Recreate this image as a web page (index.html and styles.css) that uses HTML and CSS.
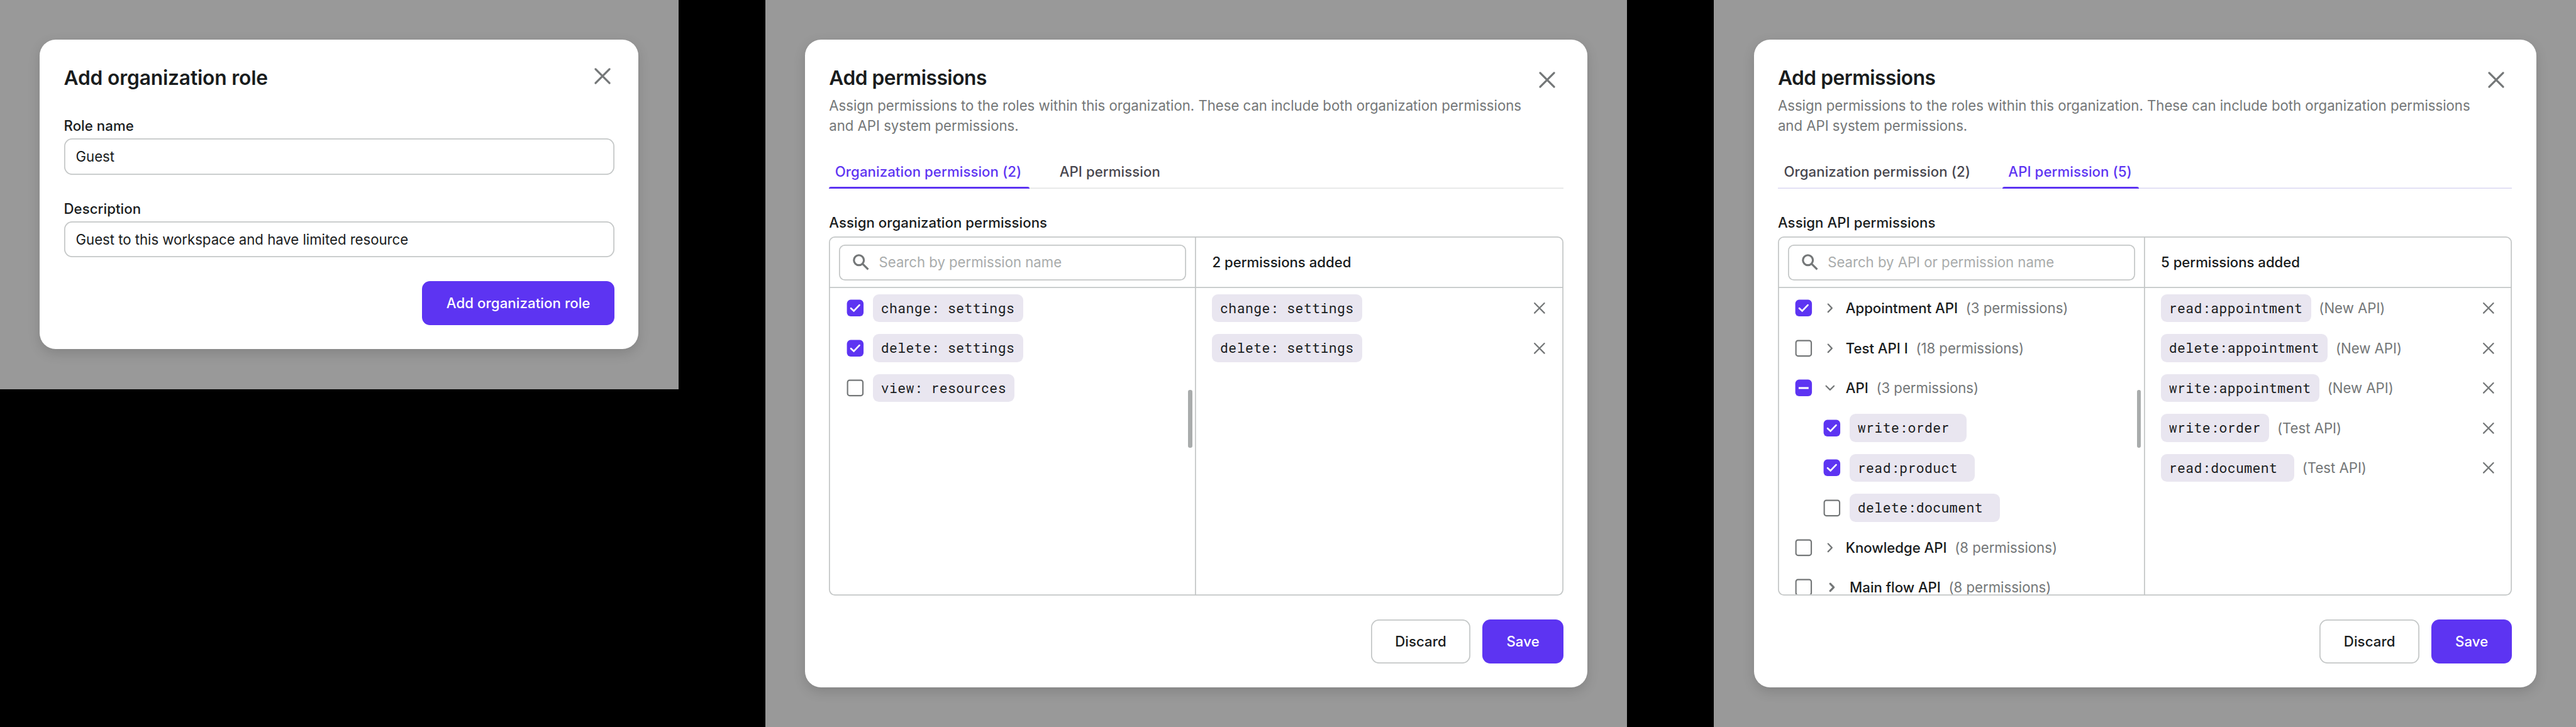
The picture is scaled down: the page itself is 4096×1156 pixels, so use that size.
FILE: index.html
```html
<!DOCTYPE html>
<html lang="en">
<head>
<meta charset="utf-8">
<title>Organization roles and permissions</title>
<link rel="stylesheet" href="styles.css">
</head>
<body>
<svg class="sprite" aria-hidden="true">
  <symbol id="close" viewBox="0 0 24 24"><path d="M5 5l14 14M19 5L5 19"/></symbol>
  <symbol id="close-sm" viewBox="0 0 20 20"><path d="M5.1 5.1l9.8 9.8M14.9 5.1l-9.8 9.8"/></symbol>
  <symbol id="search" viewBox="0 0 20 20"><circle cx="8" cy="8" r="5"/><path d="M11.6 11.6l5.7 5.7"/></symbol>
  <symbol id="right" viewBox="0 0 20 20"><path d="M8.05 6.05L11.9 10l-3.85 3.95"/></symbol>
  <symbol id="right-heavy" viewBox="0 0 20 20"><path d="M8.3 6.35L11.8 10l-3.5 3.65"/></symbol>
  <symbol id="down" viewBox="0 0 20 20"><path d="M6.05 8.05L10 11.9l3.95-3.85"/></symbol>
  <symbol id="box-on" viewBox="0 0 20 20"><rect class="fill" x="1.65" y="1.65" width="16.7" height="16.7" rx="3.8"/><path class="tick" d="M5.7 10.2l2.9 2.7 5.6-5.9"/></symbol>
  <symbol id="box-some" viewBox="0 0 20 20"><rect class="fill" x="1.65" y="1.65" width="16.7" height="16.7" rx="3.8"/><path class="dash" d="M5 10.1h10"/></symbol>
  <symbol id="box-off" viewBox="0 0 20 20"><rect class="line" x="2.3" y="2.3" width="15.4" height="15.4" rx="2.1"/></symbol>
</svg>
<main class="board">
  <section class="scene scene-role">
    <div class="card">
      <header class="head"><h1 class="role-title">Add organization role</h1><svg class="close"><use href="#close"/></svg></header>
      <label class="field"><span class="label">Role name</span><span class="input">Guest</span></label>
      <label class="field"><span class="label">Description</span><span class="input">Guest to this workspace and have limited resource</span></label>
      <footer class="foot"><span class="btn primary">Add organization role</span></footer>
    </div>
  </section>

  <section class="scene scene-permissions">
    <div class="card">
      <header class="head"><div><h1>Add permissions</h1><p class="desc">Assign permissions to the roles within this organization. These can include both organization permissions<br>and API system permissions.</p></div><svg class="close low"><use href="#close"/></svg></header>
      <nav class="tabs"><span class="tab org active">Organization permission (2)</span><span class="tab">API permission</span></nav>
      <div class="label">Assign organization permissions</div>
      <div class="transfer">
        <div class="side source">
          <div class="side-head"><div class="search"><svg><use href="#search"/></svg><span>Search by permission name</span></div></div>
          <div class="rows">
            <div class="row"><svg class="box"><use href="#box-on"/></svg><code>change: settings</code></div>
            <div class="row"><svg class="box"><use href="#box-on"/></svg><code>delete: settings</code></div>
            <div class="row"><svg class="box"><use href="#box-off"/></svg><code>view: resources</code></div>
          </div>
          <i class="thumb"></i>
        </div>
        <div class="side target">
          <div class="side-head"><span class="count">2 permissions added</span></div>
          <div class="rows">
            <div class="row"><code>change: settings</code><svg class="remove"><use href="#close-sm"/></svg></div>
            <div class="row"><code>delete: settings</code><svg class="remove"><use href="#close-sm"/></svg></div>
          </div>
        </div>
      </div>
      <footer class="foot"><span class="btn discard">Discard</span><span class="btn primary save">Save</span></footer>
    </div>
  </section>

  <section class="scene scene-permissions">
    <div class="card">
      <header class="head"><div><h1>Add permissions</h1><p class="desc">Assign permissions to the roles within this organization. These can include both organization permissions<br>and API system permissions.</p></div><svg class="close low"><use href="#close"/></svg></header>
      <nav class="tabs tinted"><span class="tab org">Organization permission (2)</span><span class="tab api active">API permission (5)</span></nav>
      <div class="label">Assign API permissions</div>
      <div class="transfer">
        <div class="side source">
          <div class="side-head"><div class="search"><svg><use href="#search"/></svg><span>Search by API or permission name</span></div></div>
          <div class="rows">
            <div class="row"><svg class="box"><use href="#box-on"/></svg><svg class="arrow"><use href="#right"/></svg><b>Appointment API</b><small>(3 permissions)</small></div>
            <div class="row"><svg class="box"><use href="#box-off"/></svg><svg class="arrow"><use href="#right"/></svg><b>Test API I</b><small>(18 permissions)</small></div>
            <div class="row"><svg class="box"><use href="#box-some"/></svg><svg class="arrow"><use href="#down"/></svg><b>API</b><small>(3 permissions)</small></div>
            <div class="row child"><svg class="box"><use href="#box-on"/></svg><code>write:order </code></div>
            <div class="row child"><svg class="box"><use href="#box-on"/></svg><code>read:product </code></div>
            <div class="row child"><svg class="box"><use href="#box-off"/></svg><code>delete:document </code></div>
            <div class="row"><svg class="box"><use href="#box-off"/></svg><svg class="arrow"><use href="#right"/></svg><b>Knowledge API</b><small>(8 permissions)</small></div>
            <div class="row"><svg class="box"><use href="#box-off"/></svg><svg class="arrow heavy"><use href="#right-heavy"/></svg><b>Main flow API</b><small>(8 permissions)</small></div>
          </div>
          <i class="thumb"></i>
        </div>
        <div class="side target">
          <div class="side-head"><span class="count">5 permissions added</span></div>
          <div class="rows">
            <div class="row"><code>read:appointment</code><small>(New API)</small><svg class="remove"><use href="#close-sm"/></svg></div>
            <div class="row"><code>delete:appointment</code><small>(New API)</small><svg class="remove"><use href="#close-sm"/></svg></div>
            <div class="row"><code>write:appointment</code><small>(New API)</small><svg class="remove"><use href="#close-sm"/></svg></div>
            <div class="row"><code>write:order</code><small>(Test API)</small><svg class="remove"><use href="#close-sm"/></svg></div>
            <div class="row"><code>read:document </code><small>(Test API)</small><svg class="remove"><use href="#close-sm"/></svg></div>
          </div>
        </div>
      </div>
      <footer class="foot"><span class="btn discard">Discard</span><span class="btn primary save">Save</span></footer>
    </div>
  </section>
</main>
</body>
</html>
```
FILE: styles.css
```css
/* 1rem stands for ten design pixels */
html {
  font-size: 15.8637px;
  --line: 0.11rem;
  --text: #191c1d;
  --muted: #747778;
  --border: #c4c7c7;
  --primary: #5d34f2;
}
* { box-sizing: border-box; }
body {
  margin: 0;
  background: #000;
  color: var(--text);
  font: 400 1.4rem/2rem Inter, "Liberation Sans", sans-serif;
  letter-spacing: -0.0015rem;
  overflow: hidden;
}
svg { display: block; flex: none; fill: none; stroke: var(--muted); stroke-linecap: round; stroke-linejoin: round; }
.sprite { position: absolute; width: 0; height: 0; }

.board { display: flex; justify-content: space-between; align-items: flex-start; width: 258.2rem; height: 72.9rem; }
.scene { background: #999; padding: 4rem; }
.scene-role { width: 68rem; height: 39rem; }
.scene-permissions { width: 86.4rem; height: 72.9rem; }
.card {
  display: flex;
  flex-direction: column;
  height: 100%;
  padding: 2.4rem;
  background: #fff;
  border-radius: 1.6rem;
  box-shadow: 0 0.4rem 1.2rem rgba(0, 0, 0, 0.14);
}

.head { display: flex; justify-content: space-between; white-space: nowrap; }
h1 { margin: 0; font-size: 2rem; line-height: 2.8rem; font-weight: 600; letter-spacing: -0.03rem; }
.role-title { letter-spacing: -0.01rem; }
.close { width: 2.4rem; height: 2.4rem; stroke-width: 2; }
.close.low { margin: 0.4rem 0.4rem 0 0; }
.desc { margin: 0.4rem 0 0; color: var(--muted); }
.label { display: block; font-weight: 500; letter-spacing: 0.004rem; white-space: nowrap; }

.scene-role .head { margin-bottom: 2.4rem; }
.field { display: block; height: 8.3rem; }
.input {
  display: flex;
  align-items: center;
  height: 3.6rem;
  margin-top: 0.3rem;
  padding: 0 1.2rem;
  border-radius: 0.8rem;
  box-shadow: inset 0 0 0 var(--line) var(--border);
}

.foot { display: flex; justify-content: flex-end; gap: 1.2rem; margin-top: auto; }
.btn {
  display: flex;
  align-items: center;
  justify-content: center;
  height: 4.4rem;
  padding: 0 2.4rem;
  border-radius: 0.8rem;
  font-weight: 500;
  letter-spacing: 0.006rem;
  white-space: nowrap;
}
.primary { background: var(--primary); color: #fff; }
.scene-role .btn { width: 19.3rem; }
.discard { width: 10rem; box-shadow: inset 0 0 0 var(--line) var(--border); }
.save { width: 8.1rem; }

.tabs {
  display: flex;
  gap: 2.4rem;
  height: 3.3rem;
  margin-top: 2rem;
  margin-bottom: 2.4rem;
  box-shadow: inset 0 -0.1rem #e1e3e3;
}
.tabs.tinted { box-shadow: inset 0 -0.1rem #dbd8f2; }
.tab { display: flex; flex-direction: column; padding: 0.6rem 0.6rem 0; color: #47464e; font-weight: 500; letter-spacing: 0.005rem; white-space: nowrap; }
.tab.org { width: 20.1rem; }
.tab.api { width: 13.7rem; }
.tab.active { color: var(--primary); }
.tab.active::after { content: ""; height: 0.2rem; margin: auto -0.6rem 0; background: var(--primary); border-radius: 0.2rem 0.2rem 0 0; }

.transfer {
  display: flex;
  height: 36rem;
  margin-top: 0.4rem;
  border-radius: 0.6rem;
  box-shadow: inset 0 0 0 var(--line) var(--border);
}
.side { position: relative; }
.source { width: 36.7rem; }
.target { width: 36.9rem; box-shadow: inset var(--line) 0 var(--border); }
.side-head { display: flex; align-items: center; height: 5.2rem; padding: 0 1rem; box-shadow: inset 0 calc(0px - var(--line)) var(--border); }
.target .side-head { padding-left: 1.7rem; }
.search {
  display: flex;
  align-items: center;
  gap: 0.8rem;
  flex: none;
  width: 34.8rem;
  height: 3.6rem;
  padding-left: 1.2rem;
  border-radius: 0.6rem;
  box-shadow: inset 0 0 0 var(--line) var(--border);
  color: #a9acac;
  white-space: nowrap;
}
.search svg { width: 2rem; height: 2rem; stroke-width: 2; stroke-linecap: butt; }
.count { font-weight: 500; }
.rows { height: 30.7rem; overflow: hidden; }
.row { display: flex; align-items: center; height: 4rem; padding: 0 1.4rem 0 1.6rem; white-space: pre; }
.target .row { padding-left: 1.7rem; }
.box { width: 2rem; height: 2rem; margin-right: 0.8rem; stroke: #fff; }
.fill { fill: var(--primary); stroke: none; }
.line { stroke: var(--muted); stroke-width: 1.35; }
.tick { stroke-width: 1.7; stroke-linejoin: miter; }
.dash { stroke-width: 2; stroke-linecap: butt; }
.source .child { padding-left: 4.4rem; }
.arrow { width: 2rem; height: 2rem; margin: 0 0.6rem 0 -0.2rem; stroke-width: 1.4; }
.arrow.heavy { margin: 0 0.8rem 0 0; stroke-width: 2; }
b { font-weight: 500; }
small { margin-left: 0.8rem; color: var(--muted); font-size: 1.4rem; }
code {
  height: 2.8rem;
  padding: 0 0.85rem 0 0.8rem;
  border-radius: 0.6rem;
  background: #e9e6f0;
  font: 400 1.35rem/2.8rem "Roboto Mono", "DejaVu Sans Mono", monospace;
  letter-spacing: 0.0273rem;
}
.remove { width: 2rem; height: 2rem; margin-left: auto; stroke-width: 1.4; }
.thumb { position: absolute; right: 0.3rem; top: 15.4rem; width: 0.4rem; height: 5.8rem; border-radius: 0.2rem; background: #a9acac; }
```
